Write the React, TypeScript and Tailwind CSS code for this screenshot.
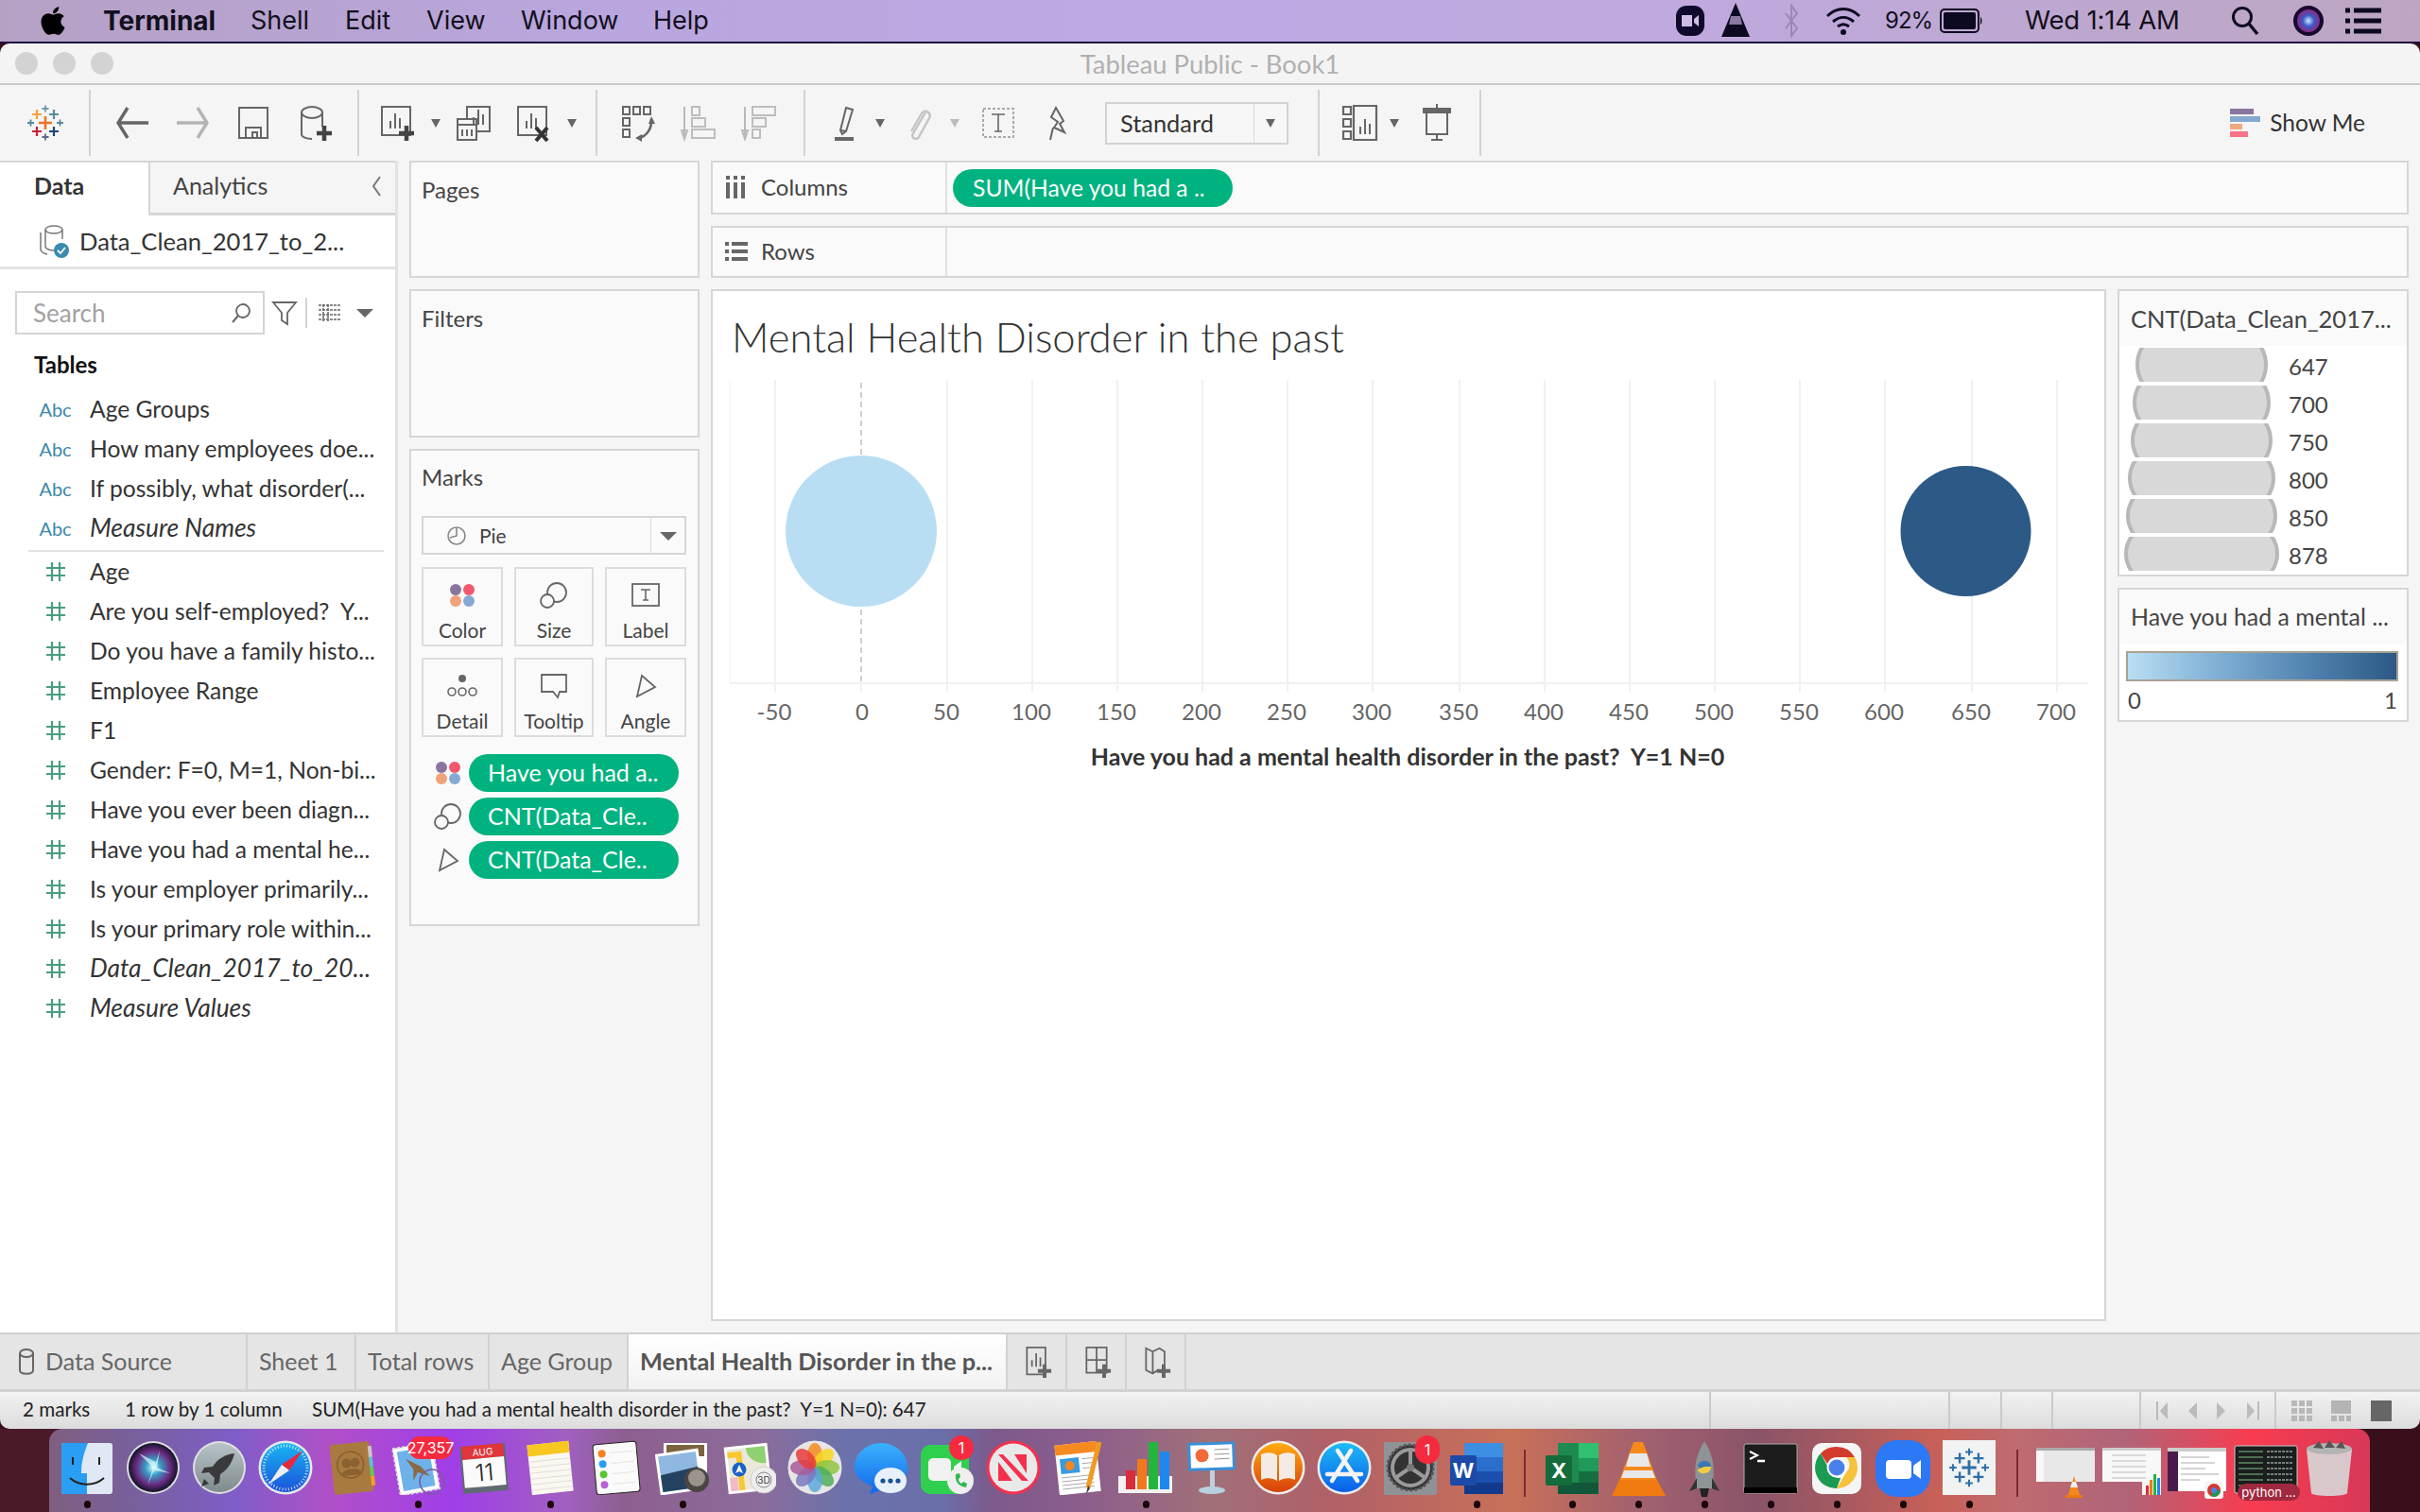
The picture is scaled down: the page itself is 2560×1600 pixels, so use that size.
import React from "react";
import { FaApple } from "react-icons/fa";

const I = ({ w = 40, h = 40, vb, className = "", children }: any) => (
  <svg width={w} height={h} viewBox={vb || `0 0 ${w} ${h}`} fill="none" className={"shrink-0 " + className}>{children}</svg>
);
const Sep = ({ className = "" }: any) => <div className={"w-[2px] h-[70px] bg-[#d2d2d2] shrink-0 " + className} />;
const Caret = ({ className = "", c = "#666" }: any) => (
  <I w={14} h={14} className={className}><path d="M2 3h10l-5 9z" fill={c} /></I>
);
const CaretL = ({ className = "" }: any) => (
  <I w={20} h={12} className={className}><path d="M1 2h18l-9 9z" fill="#666" /></I>
);
const Plus = ({ x, y, c = "#444" }: any) => <path d={`M${x} ${y - 8}v16M${x - 8} ${y}h16`} stroke={c} strokeWidth="4.5" />;
const Bars = ({ x, y }: any) => <path d={`M${x} ${y}v-8M${x + 5} ${y}v-16M${x + 10} ${y}v-11`} stroke="#666" strokeWidth="2" />;
const S = "#666";

const Cross = ({ x, y, r, c, w = 2 }: any) => <path d={`M${x} ${y - r}v${2 * r}M${x - r} ${y}h${2 * r}`} stroke={c} strokeWidth={w} />;

function TableauMark({ size = 40, mono }: any) {
  const c = (v: string) => (mono ? "#2f6fa8" : v);
  return (
    <I w={size} h={size} vb="0 0 40 40">
      <Cross x={20} y={20} r={7} c={c("#e8762b")} w={2.6} />
      <Cross x={11} y={11} r={5} c={c("#f2a33a")} w={2.2} />
      <Cross x={29} y={11} r={5} c={c("#5b879b")} w={2.2} />
      <Cross x={11} y={29} r={5} c={c("#c72035")} w={2.2} />
      <Cross x={29} y={29} r={5} c={c("#1f447b")} w={2.2} />
      <Cross x={20} y={5} r={3.5} c={c("#7099a6")} w={1.8} />
      <Cross x={20} y={35} r={3.5} c={c("#5b6591")} w={1.8} />
      <Cross x={4.5} y={20} r={3.5} c={c("#59879b")} w={1.8} />
      <Cross x={35.5} y={20} r={3.5} c={c("#5b879b")} w={1.8} />
    </I>
  );
}

function MenuBar() {
  return (
    <div className="h-[46px] shrink-0 border-b-2 border-[#1c0b40] flex items-center text-[#12101c] text-[27px] font-['Inter'] bg-[linear-gradient(90deg,#b5a1c4_0%,#b9a6de_25%,#bda9e4_50%,#bfa9de_70%,#bda6c2_100%)]">
      <FaApple className="ml-[41px] w-[30px] h-[34px] text-black" />
      <span className="ml-[38px] font-bold w-[118px] text-[28px]">Terminal</span>
      <span className="ml-[38px] w-[62px]">Shell</span>
      <span className="ml-[38px] w-[48px]">Edit</span>
      <span className="ml-[38px] w-[61px]">View</span>
      <span className="ml-[39px] w-[102px]">Window</span>
      <span className="ml-[38px]">Help</span>
      <div className="ml-auto flex items-center">
        <I w={32} h={34}><rect x="1" y="1" width="30" height="32" rx="11" fill="#0f0a2c" /><path d="M7 11h11v12H7zM20 15l5-4v12l-5-4z" fill="#cdbde4" /></I>
        <I w={32} h={38} className="ml-[16px]"><path d="M16 0L31 36H1z" fill="#0c0a20" /><path d="M11 14h10l2 9H9z" fill="#8a78a0" /></I>
        <I w={16} h={36} className="ml-[35px]"><path d="M2 10l12 16-6 8V2l6 8L2 26" stroke="#9a88b4" strokeWidth="2" /></I>
        <I w={40} h={30} className="ml-[27px]"><path d="M3 10c10-10 24-10 34 0M9 16c7-6 15-6 22 0M14 21c4-3 8-3 12 0" stroke="#0c0a20" strokeWidth="3" /><circle cx="20" cy="27" r="3" fill="#0c0a20" /></I>
        <span className="ml-[24px] text-[24px] w-[52px] tracking-[-1px]">92%</span>
        <I w={46} h={26} className="ml-[6px]"><rect x="1" y="1" width="40" height="24" rx="4" stroke="#0c0a20" strokeWidth="2" /><rect x="4" y="4" width="34" height="18" rx="2" fill="#0c0a20" /><path d="M43 9c2 1 2 7 0 8z" fill="#0c0a20" /></I>
        <span className="ml-[44px] w-[168px] whitespace-nowrap text-[27.5px] tracking-[-0.2px]">Wed 1:14 AM</span>
        <I w={30} h={32} className="ml-[50px]"><circle cx="12" cy="12" r="9.5" stroke="#0c0a20" strokeWidth="3" /><path d="M19 19l9 11" stroke="#0c0a20" strokeWidth="3.5" /></I>
        <I w={32} h={32} className="ml-[36px]"><defs><radialGradient id="sr"><stop offset="0" stopColor="#cfe9ff" /><stop offset=".5" stopColor="#3a59c8" /><stop offset="1" stopColor="#8a2a80" /></radialGradient></defs><circle cx="16" cy="16" r="16" fill="#160a30" /><circle cx="16" cy="16" r="12" fill="url(#sr)" /></I>
        <I w={40} h={32} className="ml-[22px] mr-[40px]"><path d="M1 5h5M10 5h29M1 16h5M10 16h29M1 27h5M10 27h29" stroke="#0c0a20" strokeWidth="5" /></I>
      </div>
    </div>
  );
}

function TitleBar() {
  return (
    <div className="relative h-[44px] shrink-0 flex items-center border-b-2 border-[#c9c9c9] bg-[#f4f4f4] rounded-t-[10px]">
      <div className="ml-[16px] flex gap-[16px]">
        <div className="w-[24px] h-[24px] rounded-full bg-[#d3d3d3]" />
        <div className="w-[24px] h-[24px] rounded-full bg-[#d3d3d3]" />
        <div className="w-[24px] h-[24px] rounded-full bg-[#d3d3d3]" />
      </div>
      <div className="flex-1 text-center text-[27.4px] leading-[32px] pt-[2px] text-[#b0b0b0] pr-[120px]">Tableau Public - Book1</div>
    </div>
  );
}

function Toolbar() {
  return (
    <div className="h-[80px] shrink-0 flex items-center bg-[#f5f5f5] text-[#333]">
      <div className="ml-[28px] shrink-0"><TableauMark /></div>
      <Sep className="ml-[26px]" />
      <I className="ml-[24px]"><path d="M37 20H4M15 4L5 20l10 16" stroke="#666" strokeWidth="3.4" /></I>
      <I className="ml-[24px]"><path d="M3 20h33M25 4l10 16-10 16" stroke="#b4b4b4" strokeWidth="3.4" /></I>
      <I className="ml-[24px]"><path d="M5 4h30v32H5z" stroke={S} strokeWidth="2" /><path d="M12 36V25h16v11M19 36v-6h5v6" stroke={S} strokeWidth="2" /></I>
      <I className="ml-[25px]"><ellipse cx="17" cy="9" rx="11" ry="6" stroke={S} strokeWidth="2" /><path d="M6 9v23c0 3 5 5 11 5M28 9v15" stroke={S} strokeWidth="2" /><Plus x={30} y={31} /></I>
      <Sep className="ml-[25px]" />
      <I className="ml-[19px]"><path d="M5 3h30v30H5z" stroke={S} strokeWidth="2" /><Bars x={14} y={26} /><Plus x={31} y={31} /></I>
      <Caret className="ml-[15px]" />
      <I className="ml-[13px]"><path d="M13 16V3h24v26H23" stroke={S} strokeWidth="2" /><Bars x={20} y={22} /><path d="M3 16h20v22H3zM3 22h20" stroke={S} strokeWidth="2" /><path d="M8 27v7M13 27v7M18 27v7" stroke={S} strokeWidth="2" /></I>
      <I className="ml-[22px]"><path d="M5 3h30v30H5z" stroke={S} strokeWidth="2" /><Bars x={14} y={26} /><path d="M24 25l12 14M36 25L24 39" stroke="#333" strokeWidth="4" /></I>
      <Caret className="ml-[15px]" />
      <Sep className="ml-[18px]" />
      <I className="ml-[23px]"><path d="M4 3h7v8H4zM15 3h7v8h-7zM26 3h7v8h-7zM4 15h7v8H4zM4 27h7v8H4z" stroke={S} strokeWidth="2" /><path d="M34 16c1 10-5 18-13 20" stroke={S} strokeWidth="2.5" /><path d="M34 13l4 8h-7zM17 36l7-4v8z" fill={S} /></I>
      <I className="ml-[25px]"><path d="M4 3v32M1 28l3 9 3-9z" stroke="#b9b9b9" strokeWidth="2" /><path d="M12 3h8v9h-8zM12 15h14v9H12zM12 27h24v9H12z" stroke="#bdbdbd" strokeWidth="2" /></I>
      <I className="ml-[24px]"><path d="M4 3v32M1 28l3 9 3-9z" stroke="#b9b9b9" strokeWidth="2" /><path d="M12 3h24v9H12zM12 15h14v9H12zM12 27h8v9h-8z" stroke="#bdbdbd" strokeWidth="2" /></I>
      <Sep className="ml-[26px]" />
      <I className="ml-[21px]"><path d="M16 28l6-24 7 2-7 23-4 3zM17 28l5 1" stroke={S} strokeWidth="2" /><path d="M10 37h20" stroke={S} strokeWidth="4" /></I>
      <Caret className="ml-[11px]" />
      <I className="ml-[14px]"><path d="M27 9L14 31c-3 5 3 8 6 4L31 15c3-6-5-10-8-5L12 29" stroke="#c4c4c4" strokeWidth="2.4" /></I>
      <Caret className="ml-[11px]" c="#bbb" />
      <I className="ml-[19px]"><rect x="4" y="5" width="32" height="30" stroke="#aaa" strokeWidth="2" strokeDasharray="3 2" /><path d="M13 11h14M20 11v18M16 29h8" stroke="#666" strokeWidth="1.6" /></I>
      <I className="ml-[23px]"><path d="M18 4l8 14-4 3 5 9-11-5 4-6-7-5zM15 25l-3 13" stroke={S} strokeWidth="2" /></I>
      <div className="ml-[30px] w-[194px] h-[45px] flex items-center bg-[#f7f7f7] border-2 border-[#d2d2d2] shrink-0">
        <span className="flex-1 pl-[14px] text-[25.4px]">Standard</span>
        <div className="w-[35px] h-full border-l border-[#d8d8d8] flex items-center justify-center"><Caret /></div>
      </div>
      <Sep className="ml-[31px]" />
      <I className="ml-[22px]"><path d="M3 3h8v8H3zM3 16h8v8H3zM3 29h8v8H3zM14 2h24v36H14z" stroke={S} strokeWidth="2.2" /><Bars x={21} y={32} /></I>
      <Caret className="ml-[10px]" />
      <I className="ml-[18px]"><path d="M20 0v4" stroke={S} strokeWidth="2" /><path d="M5 4h30v6H5z" fill={S} /><path d="M9 10v22h22V10M20 32v6M14 38h12" stroke={S} strokeWidth="2" /></I>
      <Sep className="ml-[25px]" />
      <div className="ml-auto mr-[58px] flex items-center">
        <div className="flex flex-col gap-[2px] w-[32px]">
          <div className="h-[6px] w-[25px] bg-[#8a75a0]" />
          <div className="h-[6px] w-[32px] bg-[#85a9d0]" />
          <div className="h-[6px] w-[13px] bg-[#f0a880]" />
          <div className="h-[6px] w-[19px] bg-[#f87288]" />
        </div>
        <span className="ml-[10px] text-[24.5px]">Show Me</span>
      </div>
    </div>
  );
}

const Hash = () => (
  <I w={22} h={22}><path d="M7 1v20M15 1v20M1 7h20M1 15h20" stroke="#4a9d80" strokeWidth="2.2" /></I>
);
function Field({ name, kind, italic }: any) {
  return (
    <div className="h-[42px] flex items-center shrink-0">
      <div className="w-[95px] flex justify-center pl-[22px]">
        {kind === "abc" ? <span className="text-[#3d88a8] text-[20px] whitespace-nowrap">Abc</span> : <Hash />}
      </div>
      <span className={"whitespace-pre text-[#333] " + (italic ? "italic text-[26.4px]" : "text-[24.6px]")}>{name}</span>
    </div>
  );
}

function DataPane() {
  return (
    <div className="w-[421px] shrink-0 h-full bg-white border-r-[3px] border-[#e2e2e2] flex flex-col">
      <div className="h-[58px] flex shrink-0 border-t-2 border-[#d6d6d6]">
        <div className="w-[157px] flex items-center pl-[36px] pb-[6px] font-bold text-[25px] text-[#333]">Data</div>
        <div className="flex-1 flex items-center justify-between bg-[#f5f5f5] border-l-2 border-b-[3px] border-[#d6d6d6] pl-[24px] pr-[12px] pb-[3px] text-[25px] text-[#444]">
          <span>Analytics</span>
          <I w={16} h={26}><path d="M12 3L5 13l7 10" stroke="#777" strokeWidth="2" /></I>
        </div>
      </div>
      <div className="h-[57px] shrink-0 border-b-[3px] border-[#e4e4e4] flex items-center pl-[39px]">
        <I w={36} h={38}>
          <ellipse cx="18" cy="7" rx="9" ry="4" stroke="#777" strokeWidth="1.5" />
          <path d="M9 7v18c0 2 4 4 9 4M27 7v10M4 10v18c0 2 3 4 7 5" stroke="#777" strokeWidth="1.5" />
          <circle cx="26" cy="29" r="8" fill="#3b8bb0" />
          <path d="M22 29l3 3 5-6" stroke="#fff" strokeWidth="1.8" />
        </I>
        <span className="ml-[9px] text-[25.6px] text-[#333] whitespace-nowrap">Data_Clean_2017_to_2...</span>
      </div>
      <div className="mt-[23px] ml-[16px] flex items-center shrink-0">
        <div className="w-[264px] h-[46px] border-2 border-[#d4d4d4] flex items-center justify-between pl-[17px] pr-[12px] text-[26px] text-[#a2a2a2]">
          <span>Search</span>
          <I w={22} h={22}><circle cx="13" cy="9" r="7" stroke="#666" strokeWidth="1.8" /><path d="M8 14l-6 7" stroke="#666" strokeWidth="2" /></I>
        </div>
        <I w={28} h={28} className="ml-[7px]"><path d="M2 3h24L17 14v12l-6-4v-8z" stroke="#666" strokeWidth="1.8" /></I>
        <div className="ml-[8px] w-[2px] h-[32px] bg-[#d4d4d4]" />
        <I w={26} h={20} className="ml-[11px]"><path d="M1 2h24M1 7h24M1 12h24M1 17h24M6 1v18M11 1v18" stroke="#666" strokeWidth="1.5" strokeDasharray="3 1" /></I>
        <CaretL className="ml-[14px]" />
      </div>
      <div className="mt-[17px] ml-[36px] font-bold text-[24px] text-[#111] leading-[30px] shrink-0">Tables</div>
      <div className="mt-[11px] flex flex-col">
        <Field kind="abc" name="Age Groups" />
        <Field kind="abc" name="How many employees doe..." />
        <Field kind="abc" name="If possibly, what disorder(..." />
        <Field kind="abc" name="Measure Names" italic />
        <div className="h-[2px] ml-[30px] w-[376px] bg-[#e2e2e2] mt-[2px] shrink-0" />
        <Field name="Age" />
        <Field name="Are you self-employed?  Y..." />
        <Field name="Do you have a family histo..." />
        <Field name="Employee Range" />
        <Field name="F1" />
        <Field name="Gender: F=0, M=1, Non-bi..." />
        <Field name="Have you ever been diagn..." />
        <Field name="Have you had a mental he..." />
        <Field name="Is your employer primarily..." />
        <Field name="Is your primary role within..." />
        <Field name="Data_Clean_2017_to_20..." italic />
        <Field name="Measure Values" italic />
      </div>
    </div>
  );
}

const Dots = () => (
  <I w={28} h={26}><circle cx="7" cy="7" r="6" fill="#8a75a0" /><circle cx="21" cy="7" r="6" fill="#f2596e" /><circle cx="7" cy="19" r="6" fill="#f0a27a" /><circle cx="21" cy="19" r="6" fill="#85a9d4" /></I>
);
const SizeIc = () => (
  <I w={30} h={28}><circle cx="18" cy="11" r="10" stroke="#666" strokeWidth="1.8" /><circle cx="8" cy="20" r="7" stroke="#666" strokeWidth="1.8" fill="#fafafa" /></I>
);
const AngleIc = () => (
  <I w={24} h={26}><path d="M3 24L8 2l14 12z" stroke="#666" strokeWidth="1.8" /></I>
);
function MarkBtn({ icon, label }: any) {
  return (
    <div className="h-[84px] border-2 border-[#dcdcdc] flex flex-col items-center bg-[#fafafa]">
      <div className="h-[52px] flex items-center justify-center pt-[4px]">{icon}</div>
      <span className="text-[21px] text-[#444] leading-[26px]">{label}</span>
    </div>
  );
}
const Pill = ({ icon, text }: any) => (
  <div className="flex items-center h-[40px]">
    <div className="w-[50px] flex justify-center pl-[6px]">{icon}</div>
    <div className="w-[222px] h-[40px] rounded-full bg-[#00b27f] text-white text-[25px] pl-[20px] flex items-center whitespace-nowrap">{text}</div>
  </div>
);

function Cards() {
  return (
    <div className="w-[307px] shrink-0 flex flex-col gap-[12px]">
      <div className="h-[124px] border-2 border-[#d6d6d6] bg-[#fafafa] pl-[11px] pt-[14px] text-[24px] text-[#444] leading-[30px]">Pages</div>
      <div className="h-[157px] border-2 border-[#d6d6d6] bg-[#fafafa] pl-[11px] pt-[14px] text-[24px] text-[#444] leading-[30px]">Filters</div>
      <div className="h-[505px] border-2 border-[#d6d6d6] bg-[#fafafa] pl-[11px] pt-[13px] flex flex-col">
        <div className="text-[24px] text-[#444] leading-[30px]">Marks</div>
        <div className="mt-[26px] h-[41px] w-[280px] border-2 border-[#d6d6d6] flex items-center">
          <I w={22} h={22} className="ml-[24px]"><circle cx="11" cy="11" r="9" stroke="#888" strokeWidth="1.6" /><path d="M11 3v8l-7 2" stroke="#888" strokeWidth="1.6" /></I>
          <span className="ml-[13px] text-[21px] text-[#444] flex-1">Pie</span>
          <div className="w-[36px] h-full border-l border-[#dcdcdc] flex items-center justify-center"><CaretL /></div>
        </div>
        <div className="mt-[13px] grid grid-cols-[86px_84px_86px] gap-x-[12px] gap-y-[12px] w-[280px]">
          <MarkBtn label="Color" icon={<Dots />} />
          <MarkBtn label="Size" icon={<SizeIc />} />
          <MarkBtn label="Label" icon={<I w={30} h={26}><rect x="1" y="1" width="28" height="23" stroke="#666" strokeWidth="1.8" /><path d="M10 7h10M15 7v11M12 18h6" stroke="#666" strokeWidth="1.6" /></I>} />
          <MarkBtn label="Detail" icon={<I w={34} h={26}><circle cx="17" cy="5" r="4" fill="#666" /><circle cx="6" cy="19" r="4" stroke="#666" strokeWidth="1.6" /><circle cx="17" cy="19" r="4" stroke="#666" strokeWidth="1.6" /><circle cx="28" cy="19" r="4" stroke="#666" strokeWidth="1.6" /></I>} />
          <MarkBtn label="Tooltip" icon={<I w={30} h={28}><path d="M2 2h26v18h-7l-2 6-5-6H2z" stroke="#666" strokeWidth="1.8" /></I>} />
          <MarkBtn label="Angle" icon={<AngleIc />} />
        </div>
        <div className="mt-[18px] flex flex-col gap-[6px]">
          <Pill icon={<Dots />} text="Have you had a.." />
          <Pill icon={<SizeIc />} text="CNT(Data_Cle.." />
          <Pill icon={<AngleIc />} text="CNT(Data_Cle.." />
        </div>
      </div>
    </div>
  );
}

const xs: [string, number][] = [["-50", 820], ["0", 911], ["50", 1002], ["100", 1092], ["150", 1182], ["200", 1272], ["250", 1362], ["300", 1452], ["350", 1544], ["400", 1634], ["450", 1724], ["500", 1814], ["550", 1904], ["600", 1994], ["650", 2086], ["700", 2176]];

function View() {
  return (
    <div className="h-[1092px] flex-1 border-2 border-[#d6d6d6] bg-white flex flex-col">
      <div className="h-[94px] pl-[20px] pt-[23px] text-[43.5px] leading-[50px] font-light text-[#333] shrink-0">Mental Health Disorder in the past</div>
      <svg width="1472" height="440" viewBox="754 402 1472 440" className="shrink-0">
        <path d="M772 402V722" stroke="#f9f9f9" strokeWidth="2" />
        {xs.map(([l, x]) => (
          <g key={l}>
            {l !== "0" && <path d={`M${x} 402V722`} stroke="#f1f1f1" strokeWidth="2" />}
            <path d={`M${x} 724V732`} stroke="#f0f0f0" strokeWidth="2" />
            <text x={l === "0" ? x + 1 : x - 1} y="762" textAnchor="middle" fontSize="24" fill="#666">{l}</text>
          </g>
        ))}
        <path d="M911 405V722" stroke="#c4c4c4" strokeWidth="1.6" strokeDasharray="6 4" />
        <path d="M772 723H2209" stroke="#f0f0f0" strokeWidth="2" />
        <circle cx="911" cy="562" r="80" fill="#b9def3" />
        <circle cx="2079.5" cy="562" r="69" fill="#2c5985" />
        <text x="1489" y="810" textAnchor="middle" fontSize="25" fontWeight="700" fill="#333" className="whitespace-pre">Have you had a mental health disorder in the past?  Y=1 N=0</text>
      </svg>
    </div>
  );
}

function Size({ w, n }: any) {
  return (
    <div className="h-[40px] flex items-start pt-[2px]">
      <div className="w-[174px] flex justify-center shrink-0">
        <svg width={w} height="36" viewBox={`0 0 ${w} 36`}>
          <ellipse cx={w / 2} cy="18" rx={w / 2 - 2} ry="48" fill="#d8d8d8" stroke="#b8b8b8" strokeWidth="4" />
        </svg>
      </div>
      <span className="ml-[5px] text-[24px] leading-[40px] text-[#444]">{n}</span>
    </div>
  );
}

function Legends() {
  return (
    <div className="w-[308px] shrink-0 flex flex-col gap-[12px]">
      <div className="h-[304px] border-2 border-[#d6d6d6] bg-white flex flex-col">
        <div className="h-[58px] bg-[#fafafa] pl-[12px] flex items-center text-[25.5px] text-[#444] whitespace-nowrap">CNT(Data_Clean_2017...</div>
        <div className="flex flex-col">
          <Size w={140} n="647" />
          <Size w={146} n="700" />
          <Size w={150} n="750" />
          <Size w={156} n="800" />
          <Size w={160} n="850" />
          <Size w={164} n="878" />
        </div>
      </div>
      <div className="h-[142px] border-2 border-[#d6d6d6] bg-white flex flex-col">
        <div className="h-[58px] bg-[#fafafa] pl-[12px] flex items-center text-[24.9px] text-[#444] whitespace-nowrap">Have you had a mental ...</div>
        <div className="mt-[7px] ml-[7px] mr-[9px] h-[32px] border-2 border-[#a8a295] bg-[linear-gradient(90deg,#b9def3,#85b4d8_30%,#5486b3_65%,#2c5985)]" />
        <div className="ml-[9px] mr-[10px] mt-[5px] flex justify-between text-[24px] leading-[30px] text-[#444]"><span>0</span><span>1</span></div>
      </div>
    </div>
  );
}

function Shelf({ icon, label, children, h }: any) {
  return (
    <div className={"border-2 border-[#d6d6d6] bg-[#fafafa] flex items-center " + h}>
      <div className="w-[248px] h-full flex items-center border-r-2 border-[#e0e0e0] text-[24px] text-[#444] shrink-0 pb-[2px]">
        <div className="w-[24px] ml-[13px]">{icon}</div>
        <span className="ml-[14px]">{label}</span>
      </div>
      {children}
    </div>
  );
}

function Main() {
  return (
    <div className="h-[1240px] shrink-0 flex bg-[#f5f5f5]">
      <DataPane />
      <div className="flex-1 flex gap-[12px] pl-[12px] pr-[12px]">
        <Cards />
        <div className="flex-1 flex flex-col gap-[12px]">
          <Shelf h="h-[57px]" label="Columns" icon={<I w={22} h={24}><path d="M3 0v4M11 0v4M19 0v4" stroke="#666" strokeWidth="4" /><path d="M3 7v17M11 7v17M19 7v17" stroke="#666" strokeWidth="4" /></I>}>
            <div className="ml-[6px] w-[296px] h-[40px] rounded-full bg-[#00b27f] text-white text-[24.7px] pl-[21px] flex items-center whitespace-nowrap">SUM(Have you had a ..</div>
          </Shelf>
          <Shelf h="h-[55px]" label="Rows" icon={<I w={24} h={22}><path d="M0 3h4M7 3h17M0 11h4M7 11h17M0 19h4M7 19h17" stroke="#666" strokeWidth="4" /></I>} />
          <div className="flex gap-[12px] items-start">
            <View />
            <Legends />
          </div>
        </div>
      </div>
    </div>
  );
}

function Tab({ w, label, active }: any) {
  return (
    <div className={"h-full shrink-0 flex items-center pl-[12px] whitespace-nowrap border-r-2 border-[#d2d2d2] " + w + " " + (active ? "text-[25.3px] bg-[linear-gradient(180deg,#ffffff,#f2f2f2)] font-bold text-[#555]" : "text-[25px] text-[#666]")}>{label}</div>
  );
}

function Tabs() {
  return (
    <div className="h-[60px] shrink-0 border-t-2 border-[#d0d0d0] bg-[#e5e5e5] flex">
      <div className="w-[262px] h-full flex items-center border-r-2 border-[#d2d2d2] text-[25px] text-[#666] pl-[19px]">
        <I w={18} h={30}><ellipse cx="9" cy="6" rx="7" ry="4" stroke="#666" strokeWidth="2" /><path d="M2 6v18c0 5 14 5 14 0V6" stroke="#666" strokeWidth="2" /></I>
        <span className="ml-[11px]">Data Source</span>
      </div>
      <Tab w="w-[115px]" label="Sheet 1" />
      <Tab w="w-[141px]" label="Total rows" />
      <Tab w="w-[147px]" label="Age Group" />
      <Tab w="w-[401px]" label="Mental Health Disorder in the p..." active />
      {[0, 1, 2].map((i) => (
        <div key={i} className="w-[63px] h-full flex items-center justify-center border-r-2 border-[#d2d2d2]">
          <I w={32} h={36} vb="0 0 36 40">
            {i === 0 && <><path d="M6 3h22v32H6z" stroke="#666" strokeWidth="2" /><Bars x={12} y={26} /></>}
            {i === 1 && <path d="M6 3h24v30H6zM18 3v30M6 18h24" stroke="#666" strokeWidth="2" />}
            {i === 2 && <path d="M6 4l8 4 8-4 6 4v26l-8-4-6 4-8-4zM14 8v26" stroke="#666" strokeWidth="2" />}
            <Plus x={27} y={31} c="#666" />
          </I>
        </div>
      ))}
    </div>
  );
}

function Status() {
  const seps = ["ml-[820px]", "ml-[251px]", "ml-[53px]", "ml-[52px]", "ml-[91px]"];
  return (
    <div className="h-[42px] shrink-0 border-t-[3px] border-[#d2d2d2] rounded-b-[10px] flex items-center text-[20.6px] text-[#222] bg-[linear-gradient(180deg,#f2f2f2,#dcdcdc)]">
      <span className="ml-[24px] w-[74px] whitespace-nowrap pb-[2px]">2 marks</span>
      <span className="ml-[34px] w-[166px] whitespace-nowrap pb-[2px]">1 row by 1 column</span>
      <span className="ml-[32px] w-[658px] whitespace-pre pb-[2px]">SUM(Have you had a mental health disorder in the past?  Y=1 N=0): 647</span>
      {seps.map((s) => <div key={s} className={"w-[2px] h-full bg-[#cacaca] shrink-0 " + s} />)}
      <I w={110} h={22} className="ml-[16px]">
        <path d="M1 1v20" stroke="#bbb" strokeWidth="2" />
        <path d="M4 11l8-9v18zM43 2l-9 9 9 9zM64 2l9 9-9 9zM96 2l8 9-8 9z" fill="#bbb" />
        <path d="M108 1v20" stroke="#bbb" strokeWidth="2" />
      </I>
      <div className="w-[2px] h-full bg-[#cacaca] ml-[15px] shrink-0" />
      <I w={110} h={24} className="ml-[16px]">
        <path d="M0 1h6v6H0zM8 1h6v6H8zM16 1h6v6h-6zM0 9h6v6H0zM8 9h6v6H8zM16 9h6v6h-6zM0 17h6v6H0zM8 17h6v6H8zM16 17h6v6h-6z" fill="#b8b8b8" />
        <path d="M42 1h21v14H42zM42 17h6v6h-6zM50 17h6v6h-6zM58 17h5v6h-5z" fill="#b4b4b4" />
        <rect x="84" y="1" width="22" height="22" fill="#666" />
      </I>
    </div>
  );
}

/* ----- dock icons, 58 x 58 ----- */
const Finder = () => (
  <I w={58} h={58}>
    <rect x="2" y="3" width="54" height="54" rx="3" fill="#dfe9f5" />
    <path d="M5 3h25c-4 10-7 20-7 32h6v22H5a3 3 0 0 1-3-3V6a3 3 0 0 1 3-3z" fill="#2a9df5" />
    <path d="M14 18v8M42 18v8" stroke="#222" strokeWidth="2" />
    <path d="M11 40c10 9 26 9 36 0" stroke="#222" strokeWidth="2" />
  </I>
);
const SiriI = () => (
  <I w={58} h={58}>
    <defs><radialGradient id="s1"><stop offset="0" stopColor="#dff" /><stop offset=".3" stopColor="#3aa0c8" /><stop offset=".7" stopColor="#6a2a80" /><stop offset="1" stopColor="#111428" /></radialGradient></defs>
    <circle cx="29" cy="29" r="28" fill="#ddd" /><circle cx="29" cy="29" r="26" fill="url(#s1)" />
    <path d="M29 29L14 14l18 9 4-12-3 18 14 6-17-3-7 16z" fill="#dff" opacity=".65" />
  </I>
);
const Launch = () => (
  <I w={58} h={58}>
    <defs><linearGradient id="l1" x1="0" y1="0" x2="0" y2="1"><stop offset="0" stopColor="#b8c4c8" /><stop offset="1" stopColor="#7f8a8c" /></linearGradient></defs>
    <circle cx="29" cy="29" r="28" fill="#e0e0e0" /><circle cx="29" cy="29" r="26" fill="url(#l1)" />
    <path d="M45 14c-10 1-18 6-23 14l-9 1-3 6 8-1 6 6-1 8 6-3 1-9c8-5 13-13 15-22z" fill="#3a3a3c" />
    <path d="M13 41l-3 8 8-3z" fill="#3a3a3c" />
  </I>
);
const Safari = () => (
  <I w={58} h={58}>
    <defs><linearGradient id="sf" x1="0" y1="0" x2="0" y2="1"><stop offset="0" stopColor="#19b5f5" /><stop offset="1" stopColor="#1a52d8" /></linearGradient></defs>
    <circle cx="29" cy="29" r="28.5" fill="#e8e8e8" /><circle cx="29" cy="29" r="26" fill="url(#sf)" />
    <circle cx="29" cy="29" r="23" stroke="#fff" strokeWidth="3" strokeDasharray="1 2.2" opacity=".8" />
    <path d="M47 11L25 26l8 6z" fill="#e8283c" /><path d="M11 47l22-15-8-6z" fill="#eee" />
  </I>
);
const Contacts = () => (
  <I w={58} h={58}>
    <g transform="rotate(-6 29 29)">
      <rect x="8" y="3" width="42" height="53" rx="3" fill="#a97a3f" />
      <path d="M48 8h4v12h-4z" fill="#c9c9c9" /><path d="M48 20h4v10h-4z" fill="#5cc0d8" /><path d="M48 30h4v10h-4z" fill="#60c860" /><path d="M48 40h4v10h-4z" fill="#f5a020" />
      <circle cx="28" cy="26" r="14" stroke="#8b6130" strokeWidth="1.6" />
      <circle cx="24" cy="24" r="5" fill="#8b6130" /><circle cx="33" cy="24" r="5" fill="#8b6130" /><path d="M17 37c1-9 22-9 23 0z" fill="#8b6130" />
    </g>
  </I>
);
const Mail = () => (
  <I w={58} h={58}>
    <g transform="rotate(-10 29 29)">
      <rect x="6" y="5" width="42" height="50" fill="#fff" stroke="#ddd" strokeDasharray="3 2" strokeWidth="2" />
      <rect x="10" y="9" width="34" height="42" fill="#6fb2ea" />
      <path d="M18 18l14 10 8 12-12-6-6 8 2-12z" fill="#8a6a45" />
    </g>
    <circle cx="44" cy="44" r="13" stroke="#7a5aa0" strokeWidth="1.5" />
  </I>
);
const Cal = () => (
  <I w={58} h={58}>
    <g transform="rotate(-5 29 29)">
      <rect x="5" y="5" width="48" height="50" fill="#5f6a72" />
      <rect x="7" y="5" width="44" height="14" fill="#e0353b" />
      <rect x="7" y="19" width="44" height="30" fill="#fafafa" />
      <text x="29" y="16" textAnchor="middle" fontSize="10" fill="#fff" fontFamily="Inter">AUG</text>
      <text x="29" y="43" textAnchor="middle" fontSize="25" fill="#222" fontFamily="Inter" fontWeight="300">11</text>
    </g>
  </I>
);
const Notes = () => (
  <I w={58} h={58}>
    <g transform="rotate(-6 29 29)">
      <rect x="7" y="3" width="44" height="53" fill="#faf8f0" />
      <rect x="7" y="3" width="44" height="12" fill="#f8c820" />
      <path d="M7 21h44M7 27h44M7 33h44M7 39h44M7 45h44M7 51h44" stroke="#ddd" strokeWidth="1" />
    </g>
  </I>
);
const Rem = () => (
  <I w={58} h={58}>
    <g transform="rotate(-5 29 29)">
      <rect x="6" y="3" width="46" height="53" rx="3" fill="#fafafa" stroke="#222" />
      <circle cx="15" cy="13" r="4" fill="#f5811f" /><circle cx="15" cy="24" r="4" fill="#2a9df5" /><circle cx="15" cy="35" r="4" fill="#58c832" /><circle cx="15" cy="46" r="4" fill="#b860d8" />
      <path d="M24 13h24M24 24h24M24 35h24M24 46h24" stroke="#e4e4e4" />
    </g>
  </I>
);
const Preview = () => (
  <I w={58} h={58}>
    <rect x="9" y="3" width="46" height="42" fill="#fff" /><rect x="12" y="5" width="40" height="12" fill="#7a6440" />
    <g transform="rotate(-8 29 29)">
      <rect x="2" y="11" width="46" height="44" fill="#fff" /><rect x="5" y="14" width="40" height="38" fill="#8fb8e0" />
      <path d="M5 34l40-4v22H5z" fill="#24425f" />
    </g>
    <circle cx="44" cy="42" r="13" fill="#4a4642" /><circle cx="44" cy="40" r="9" fill="#9a948c" />
  </I>
);
const Maps = () => (
  <I w={58} h={58}>
    <g transform="rotate(-6 29 29)">
      <rect x="5" y="5" width="46" height="50" fill="#fff" /><rect x="8" y="8" width="40" height="44" fill="#ece8d8" />
      <path d="M28 8h20v18c-10 0-20-6-20-18z" fill="#8fd070" />
      <path d="M8 14h12v38" stroke="#f8c830" strokeWidth="6" />
      <path d="M8 38h8v14H8z" fill="#f4b8c8" />
    </g>
    <circle cx="19" cy="31" r="7.5" fill="#1a62c8" /><path d="M19 26l4 9-4-2-4 2z" fill="#fff" />
    <circle cx="45" cy="42" r="14" fill="#eee" stroke="#ccc" /><circle cx="45" cy="42" r="8" stroke="#888" />
    <text x="45" y="46" textAnchor="middle" fontSize="10" fill="#444" fontFamily="Inter">3D</text>
  </I>
);
const Photos = () => {
  const cols = ["#f58a1f", "#f6d720", "#8ec63f", "#4fae5a", "#5ea7dc", "#7a79c0", "#a85a9a", "#e83c3c"];
  return (
    <I w={58} h={58}>
      <circle cx="29" cy="29" r="28.5" fill="#e6e6e6" />
      {cols.map((c, i) => (
        <ellipse key={c} cx="29" cy="16" rx="8" ry="13" fill={c} opacity=".85" transform={`rotate(${i * 45} 29 29)`} />
      ))}
    </I>
  );
};
const Msg = () => (
  <I w={58} h={58}>
    <defs><linearGradient id="m1" x1="0" y1="0" x2="0" y2="1"><stop offset="0" stopColor="#3ab2fc" /><stop offset="1" stopColor="#1266ec" /></linearGradient></defs>
    <path d="M29 3c15 0 28 11 28 26 0 16-13 24-29 24l-5 2-6 2 3-8C8 44 1 38 1 29 1 14 14 3 29 3z" fill="url(#m1)" />
    <path d="M39 29c10 0 17 6 17 14 0 8-7 13-17 13-9 0-17-5-17-13 0-8 8-14 17-14z" fill="#e8f1fa" />
    <circle cx="31" cy="43" r="2.6" fill="#164f9e" /><circle cx="39" cy="43" r="2.6" fill="#164f9e" /><circle cx="47" cy="43" r="2.6" fill="#164f9e" />
  </I>
);
const Face = () => (
  <I w={58} h={58}>
    <rect x="1" y="5" width="51" height="52" rx="10" fill="#2fd04e" />
    <rect x="9" y="19" width="24" height="24" rx="5" fill="#f2f2f2" /><path d="M36 28l8-6v18l-8-6z" fill="#f2f2f2" />
    <circle cx="43" cy="43" r="14" fill="#efefef" /><path d="M38 36c-1 8 3 13 11 14l1-4-4-2-2 2c-2-1-3-3-3-5l2-2-1-4z" fill="#2fb84e" />
  </I>
);
const News = () => (
  <I w={58} h={58}>
    <circle cx="29" cy="29" r="28.5" fill="#f5304e" /><circle cx="29" cy="29" r="25.5" fill="#e9e9e9" />
    <path d="M13 15h5l27 28h-7zM30 15h13v20zM13 23l15 20H13z" fill="#f5304e" />
  </I>
);
const Pages = () => (
  <I w={58} h={58}>
    <g transform="rotate(-6 29 29)">
      <rect x="5" y="3" width="44" height="53" fill="#fff" /><rect x="5" y="3" width="44" height="11" fill="#f58a1f" />
      <rect x="9" y="18" width="20" height="16" fill="#3a9be0" /><circle cx="19" cy="26" r="5" fill="#f5861f" />
      <path d="M9 38h34M9 42h34M9 46h34M9 50h34M32 20h12M32 25h12M32 30h12" stroke="#aaa" />
    </g>
    <path d="M50 2L38 50" stroke="#f09a20" strokeWidth="5" /><path d="M38 48l-2 9 4-6z" fill="#333" />
  </I>
);
const Numbers = () => (
  <I w={58} h={58}>
    <path d="M0 38h57v18H0z" fill="#f2f2f2" />
    <rect x="8" y="32" width="10" height="20" fill="#d92b3a" /><rect x="20" y="20" width="10" height="32" fill="#f0791c" />
    <rect x="32" y="2" width="10" height="50" fill="#22b63c" /><rect x="44" y="12" width="10" height="40" fill="#1e88ef" />
  </I>
);
const Keynote = () => (
  <I w={58} h={58}>
    <g transform="rotate(-2 29 29)"><rect x="4" y="2" width="50" height="30" fill="#3a8fd8" /><rect x="7" y="5" width="44" height="24" fill="#fff" /><circle cx="19" cy="16" r="7" fill="#f06a3a" /><path d="M32 10h16M32 15h16M32 20h16" stroke="#999" /></g>
    <path d="M27 32h5v20h-5z" fill="#c0d0dc" /><ellipse cx="29" cy="53" rx="14" ry="4" fill="#b8d0e0" />
  </I>
);
const Books = () => (
  <I w={58} h={58}>
    <defs><linearGradient id="b1" x1="0" y1="0" x2="0" y2="1"><stop offset="0" stopColor="#ffaa10" /><stop offset="1" stopColor="#d8400c" /></linearGradient></defs>
    <circle cx="29" cy="29" r="28.5" fill="#eee" /><circle cx="29" cy="29" r="26" fill="url(#b1)" />
    <path d="M11 15c7-3 13-2 17 1v27c-4-3-11-4-17-1zM47 15c-7-3-13-2-17 1v27c4-3 11-4 17-1z" fill="#f4ece4" />
  </I>
);
const AppStore = () => (
  <I w={58} h={58}>
    <defs><linearGradient id="a1" x1="0" y1="0" x2="0" y2="1"><stop offset="0" stopColor="#1ebcf8" /><stop offset="1" stopColor="#0a5ee8" /></linearGradient></defs>
    <circle cx="29" cy="29" r="28.5" fill="#ececec" /><circle cx="29" cy="29" r="26" fill="url(#a1)" />
    <path d="M22 11l21 32M36 11L16 43M11 36h36" stroke="#f4f4f4" strokeWidth="4.5" strokeLinecap="round" />
  </I>
);
const Prefs = () => (
  <I w={58} h={58}>
    <rect x="1" y="2" width="56" height="56" rx="2" fill="#8f9396" />
    <circle cx="29" cy="29" r="24" fill="#333" stroke="#555" strokeWidth="3" strokeDasharray="3 2" />
    <circle cx="29" cy="29" r="19" fill="none" stroke="#9a9a9a" strokeWidth="4" />
    <path d="M29 29V10M29 29l16 11M29 29L13 40" stroke="#9a9a9a" strokeWidth="4" />
    <circle cx="29" cy="29" r="4" fill="#777" />
  </I>
);
const Word = () => (
  <I w={58} h={58}>
    <path d="M16 3h41v15H16z" fill="#3d8fe4" /><path d="M16 18h41v15H16z" fill="#2a6fcb" /><path d="M16 33h41v12H16z" fill="#1a4fb0" /><path d="M16 45h41v12H16z" fill="#123a8c" />
    <rect x="1" y="16" width="28" height="32" rx="2" fill="#1b4aa8" />
    <text x="15" y="40" textAnchor="middle" fontSize="22" fontWeight="700" fill="#fff" fontFamily="Inter">W</text>
  </I>
);
const Excel = () => (
  <I w={58} h={58}>
    <path d="M14 3h22v54H14z" fill="#1f8a50" /><path d="M36 3h21v16H36z" fill="#30c070" /><path d="M36 19h21v14H36z" fill="#1f9a5a" /><path d="M36 33h21v12H36z" fill="#166e40" /><path d="M14 45h43v12H14z" fill="#12573a" />
    <rect x="1" y="16" width="28" height="32" rx="2" fill="#136c3a" />
    <text x="15" y="40" textAnchor="middle" fontSize="22" fontWeight="700" fill="#fff" fontFamily="Inter">X</text>
  </I>
);
const Vlc = () => (
  <I w={58} h={60}>
    <path d="M24 2h10l17 46H7z" fill="#f58a1a" /><path d="M20 14h18l4 14H16z" fill="#e8e8e8" /><path d="M14 32h30l3 8H11z" fill="#e8e8e8" />
    <path d="M9 42h40l9 17H1z" fill="#f07a10" />
  </I>
);
const Rocket = () => (
  <I w={58} h={62}>
    <path d="M29 1c9 14 12 28 8 50H21C17 29 20 15 29 1z" fill="#8e9396" />
    <path d="M21 40l-8 14 8-3zM37 40l8 14-8-3z" fill="#333" /><path d="M24 51h10l-2 9h-6z" fill="#222" />
    <path d="M22 28c0-8 14-8 14 0l-7 3z" fill="#3a78b0" /><path d="M36 28c0 9-14 9-14 3l7-3z" fill="#f0cc40" />
  </I>
);
const Term = () => (
  <I w={58} h={58}>
    <rect x="1" y="4" width="56" height="52" rx="2" fill="#1c1c1c" stroke="#aaa" /><rect x="1" y="50" width="56" height="6" fill="#000" />
    <path d="M7 12l8 4-8 4" stroke="#fff" strokeWidth="2" /><path d="M15 22h8" stroke="#fff" strokeWidth="2.5" />
  </I>
);
const Chrome = () => (
  <I w={58} h={58}>
    <rect x="3" y="3" width="52" height="54" rx="10" fill="#f5f5f5" />
    <path d="M29 7a22 22 0 0 1 19 11H29a11 11 0 0 0-10 7L12 14A22 22 0 0 1 29 7z" fill="#d33b2c" />
    <path d="M48 18a22 22 0 0 1-19 33l10-17a11 11 0 0 0 0-16z" fill="#f5c33b" />
    <path d="M29 51A22 22 0 0 1 12 14l9 17a11 11 0 0 0 12 9z" fill="#1a9a52" />
    <circle cx="29" cy="29" r="10.5" fill="#fff" /><circle cx="29" cy="29" r="8.5" fill="#4a80ec" />
  </I>
);
const ZoomI = () => (
  <I w={58} h={60}>
    <rect x="0" y="0" width="58" height="60" rx="22" fill="#2d78f4" />
    <rect x="11" y="21" width="27" height="20" rx="4" fill="#fff" /><path d="M40 27l8-6v20l-8-6z" fill="#fff" />
  </I>
);
const Tab2 = () => (
  <div className="w-[56px] h-[58px] bg-[#f1f3f3] flex items-center justify-center"><TableauMark size={44} mono /></div>
);
const Thumb = ({ n }: any) => (
  <I w={70} h={62} className="overflow-visible">
    {n === 0 && (<><rect x="5" y="8" width="62" height="36" fill="#e8e8e8" /><rect x="5" y="8" width="62" height="3" fill="#aaa" /><rect x="5" y="11" width="8" height="33" fill="#f7f7f7" /><path d="M45 38l-6 20h12z" fill="#f58a1a" /><path d="M36 58h18v3H36z" fill="#e87a10" /><path d="M43 44h4l2 6h-8z" fill="#eee" /></>)}
    {n === 1 && (<><rect x="5" y="8" width="62" height="36" fill="#f8f8f8" /><rect x="5" y="8" width="62" height="3" fill="#ccc" /><path d="M15 16h36M15 22h36M15 28h36M15 34h36M15 40h36" stroke="#bbb" /><rect x="47" y="44" width="20" height="14" fill="#f2f2f2" /><path d="M51 48h3v10h-3z" fill="#d92b3a" /><path d="M55 42h3v16h-3z" fill="#f0791c" /><path d="M59 36h3v22h-3z" fill="#22b63c" /><path d="M63 40h3v18h-3z" fill="#1e88ef" /></>)}
    {n === 2 && (<><rect x="4" y="8" width="62" height="46" fill="#fff" /><rect x="4" y="8" width="62" height="4" fill="#ccc" /><rect x="4" y="12" width="11" height="42" fill="#4a1a4e" /><path d="M18 18h30M18 24h36M18 30h26M18 36h40M18 42h20" stroke="#aaa" /><rect x="43" y="44" width="20" height="18" rx="3" fill="#f5f5f5" /><circle cx="53" cy="53" r="7" fill="#d33b2c" /><path d="M53 53l7 0a7 7 0 0 1-10 6z" fill="#1a9a52" /><circle cx="53" cy="53" r="3" fill="#4a80ec" /></>)}
    {n === 3 && (<><rect x="5" y="6" width="66" height="50" rx="2" fill="#1a1e1c" stroke="#ccc" /><path d="M9 12h26M9 18h26M9 24h26M9 30h26M9 36h26M9 42h26M9 48h26" stroke="#4e6e54" strokeWidth="2" /><path d="M39 12h28M39 18h28M39 24h28M39 30h28M39 36h28M39 42h28M39 48h28" stroke="#77807a" strokeWidth="2" strokeDasharray="3 1" /></>)}
  </I>
);
const Trash = () => (
  <I w={58} h={62}>
    <path d="M5 10h48l-5 46c-1 4-37 4-38 0z" fill="#d8d8d8" opacity=".9" />
    <ellipse cx="29" cy="9" rx="24" ry="6" fill="#b4b4b4" />
    <path d="M12 8l6-7 5 8zM24 8l5-8 6 8zM36 8l6-7 4 8z" fill="#555" />
  </I>
);

function Badge({ t, className }: any) {
  return <span className={"absolute flex items-center justify-center bg-[#f52a3e] text-white text-[16px] font-['Inter'] " + className}>{t}</span>;
}
function D({ dot, children }: any) {
  return (
    <div className="relative w-[70px] shrink-0 flex flex-col items-center pt-[12px]">
      <div className="h-[58px] flex items-start justify-center">{children}</div>
      <div className={"w-[7px] h-[8px] rounded-full mt-[6px] " + (dot ? "bg-[#1a0408]" : "")} />
    </div>
  );
}
const DockSep = () => <div className="w-[31px] shrink-0 flex justify-center pt-[22px]"><div className="w-[2px] h-[50px] bg-[#7a2c30]" /></div>;

function Dock() {
  return (
    <div className="flex-1 flex bg-[linear-gradient(90deg,#4a1a28,#3a0f1c)]">
      <div className="ml-[52px] w-[2455px] rounded-t-[14px] flex pl-[5px] overflow-hidden bg-[linear-gradient(90deg,#7f5f80_0%,#78609f_4%,#7f5dc8_8%,#b050c8_12%,#a03ee8_17.4%,#a060c0_22.3%,#8d5f8f_24.8%,#8c6c9a_30.5%,#6a72ac_34.5%,#6b6ea8_38.6%,#7c5a8c_40.6%,#8c5e8c_44.7%,#a07078_50%,#b06068_55%,#c87058_63%,#a06070_69%,#8a5468_73.6%,#c86058_81.4%,#bf6b70_84.6%,#b06478_89.5%,#f83c50_94.8%,#d83858_100%)]">
        <D dot><Finder /></D>
        <D><SiriI /></D>
        <D><Launch /></D>
        <D><Safari /></D>
        <D><Contacts /></D>
        <D dot><Mail /><Badge t="27,357" className="top-[8px] left-[25px] w-[47px] h-[24px] rounded-[12px]" /></D>
        <D><Cal /></D>
        <D dot><Notes /></D>
        <D><Rem /></D>
        <D dot><Preview /></D>
        <D><Maps /></D>
        <D><Photos /></D>
        <D><Msg /></D>
        <D><Face /><Badge t="1" className="top-[7px] left-[37px] w-[26px] h-[26px] rounded-full" /></D>
        <D><News /></D>
        <D><Pages /></D>
        <D dot><Numbers /></D>
        <D><Keynote /></D>
        <D><Books /></D>
        <D><AppStore /></D>
        <D><Prefs /><Badge t="1" className="top-[7px] left-[40px] w-[26px] h-[30px] rounded-full" /></D>
        <D dot><Word /></D>
        <DockSep />
        <D dot><Excel /></D>
        <D dot><Vlc /></D>
        <D dot><Rocket /></D>
        <D dot><Term /></D>
        <D dot><Chrome /></D>
        <D dot><ZoomI /></D>
        <D dot><Tab2 /></D>
        <DockSep />
        <D><Thumb n={0} /></D>
        <D><Thumb n={1} /></D>
        <D><Thumb n={2} /></D>
        <D><Thumb n={3} /><span className="absolute left-[8px] top-[58px] w-[66px] h-[18px] rounded-[9px] bg-[#a02840] text-white text-[13px] leading-[18px] text-center font-['Inter']">python ...</span></D>
        <D><Trash /></D>
      </div>
    </div>
  );
}

export default function App() {
  return (
    <div className="w-[2560px] h-[1600px] overflow-hidden flex flex-col font-['Lato',sans-serif] bg-[#3a0f1c]">
      <MenuBar />
      <TitleBar />
      <Toolbar />
      <Main />
      <Tabs />
      <Status />
      <Dock />
    </div>
  );
}
